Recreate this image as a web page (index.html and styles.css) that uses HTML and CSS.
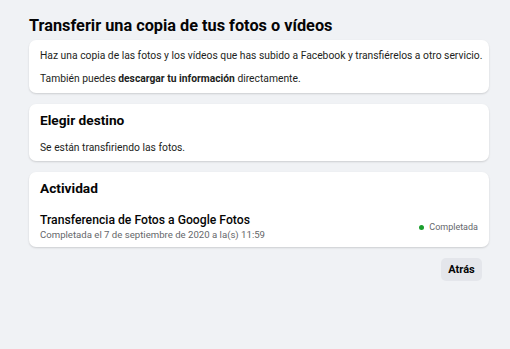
FILE: index.html
```html
<!DOCTYPE html>
<html lang="es">
<head>
    <meta charset="utf-8">
    <title>Transferir una copia de tus fotos o vídeos</title>
    <link rel="stylesheet" href="styles.css">
</head>
<body>
    <div class="page">
        <h1 class="title">Transferir una copia de tus fotos o vídeos</h1>

        <div class="card intro">
            <p>Haz una copia de las fotos y los vídeos que has subido a Facebook y transfiérelos a otro servicio.</p>
            <p>También puedes <b>descargar tu información</b> directamente.</p>
        </div>

        <div class="card">
            <h2>Elegir destino</h2>
            <p class="status">Se están transfiriendo las fotos.</p>
        </div>

        <div class="card">
            <h2>Actividad</h2>
            <div class="activity">
                <div class="activity-info">
                    <div class="activity-name">Transferencia de Fotos a Google Fotos</div>
                    <div class="activity-date">Completada el 7 de septiembre de 2020 a la(s) 11:59</div>
                </div>
                <div class="activity-state"><span class="dot"></span>Completada</div>
            </div>
        </div>

        <div class="actions">
            <button class="back">Atrás</button>
        </div>
    </div>
</body>
</html>
```

FILE: styles.css
```css
body {
    margin: 0px;
    background-color: #f0f2f5;
    font-family: Roboto, "Noto Sans", sans-serif;
    color: #1c1e21;
}
.page {
    width: 460px;
    margin-left: 29px;
    padding-top: 14px;
}
.title {
    font-size: 16.3px;
    line-height: 24px;
    font-weight: 700;
    color: #050505;
    margin: 0 0 2px 0;
}
.card {
    background: #ffffff;
    border-radius: 7px;
    box-shadow: 0 1px 2px rgba(0, 0, 0, 0.15);
    padding: 6px 11px 5px;
    margin-bottom: 11px;
}
.card p {
    margin: 0;
    font-size: 10.3px;
    line-height: 16px;
    white-space: nowrap;
}
.intro {
    padding: 8px 11px 6px;
    display: flex;
    flex-direction: column;
    gap: 7px;
}
.card h2 {
    margin: 0;
    font-size: 13.7px;
    line-height: 20px;
    font-weight: 700;
    color: #050505;
}
.status {
    margin-top: 10px !important;
}
.activity {
    display: flex;
    align-items: center;
    justify-content: space-between;
    margin-top: 14px;
}
.activity-name {
    font-size: 12.2px;
    line-height: 16px;
    font-weight: 500;
    color: #050505;
}
.activity-date {
    font-size: 9.6px;
    line-height: 14px;
    color: #65676b;
}
.activity-state {
    font-size: 9px;
    color: #65676b;
    display: flex;
    align-items: center;
    gap: 5px;
}
.dot {
    width: 5px;
    height: 5px;
    border-radius: 50%;
    background: #1a9e2d;
}
.actions {
    display: flex;
    justify-content: flex-end;
    padding-right: 7px;
}
.back {
    font-family: Roboto, "Noto Sans", sans-serif;
    font-size: 11px;
    font-weight: 700;
    color: #050505;
    background: #e4e6eb;
    border: 0;
    border-radius: 5px;
    height: 23px;
    width: 41px;
    padding: 0;
}
```
